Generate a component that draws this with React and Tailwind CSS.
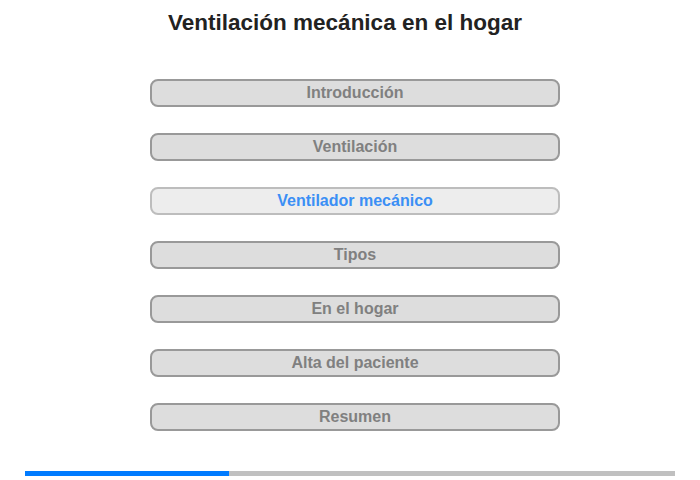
import React from 'react';

const items = ['Introducción', 'Ventilación', 'Ventilador mecánico', 'Tipos', 'En el hogar', 'Alta del paciente', 'Resumen'];
const active = 2;

const App = () => {
    return (
        <div className="w-[700px] h-[480px] bg-white font-['Liberation_Sans',Arial,sans-serif] flex flex-col items-center">
            <h1 className="mt-[10px] mr-[10px] h-[26px] text-[22.5px] leading-[26px] font-bold text-[#222]">Ventilación mecánica en el hogar</h1>

            <div className="mt-[43px] ml-[10px] flex flex-col gap-[26px]">
                {items.map((label, i) => (
                    <div
                        key={label}
                        className={
                            i === active
                                ? 'w-[410px] h-[28px] rounded-[8px] border-2 border-[#bdbdbd] bg-[#ededed] flex items-center justify-center text-[16px] font-bold text-[#3b8ff5]'
                                : 'w-[410px] h-[28px] rounded-[8px] border-2 border-[#999] bg-[#dddddd] flex items-center justify-center text-[16px] font-bold text-[#808080]'
                        }
                    >
                        {label}
                    </div>
                ))}
            </div>

            <div className="mt-[40px] w-[650px] h-[5px] bg-[#c0c0c0] flex">
                <div className="w-[204px] h-full bg-[#007bff]"></div>
            </div>
        </div>
    );
};

export default App;
